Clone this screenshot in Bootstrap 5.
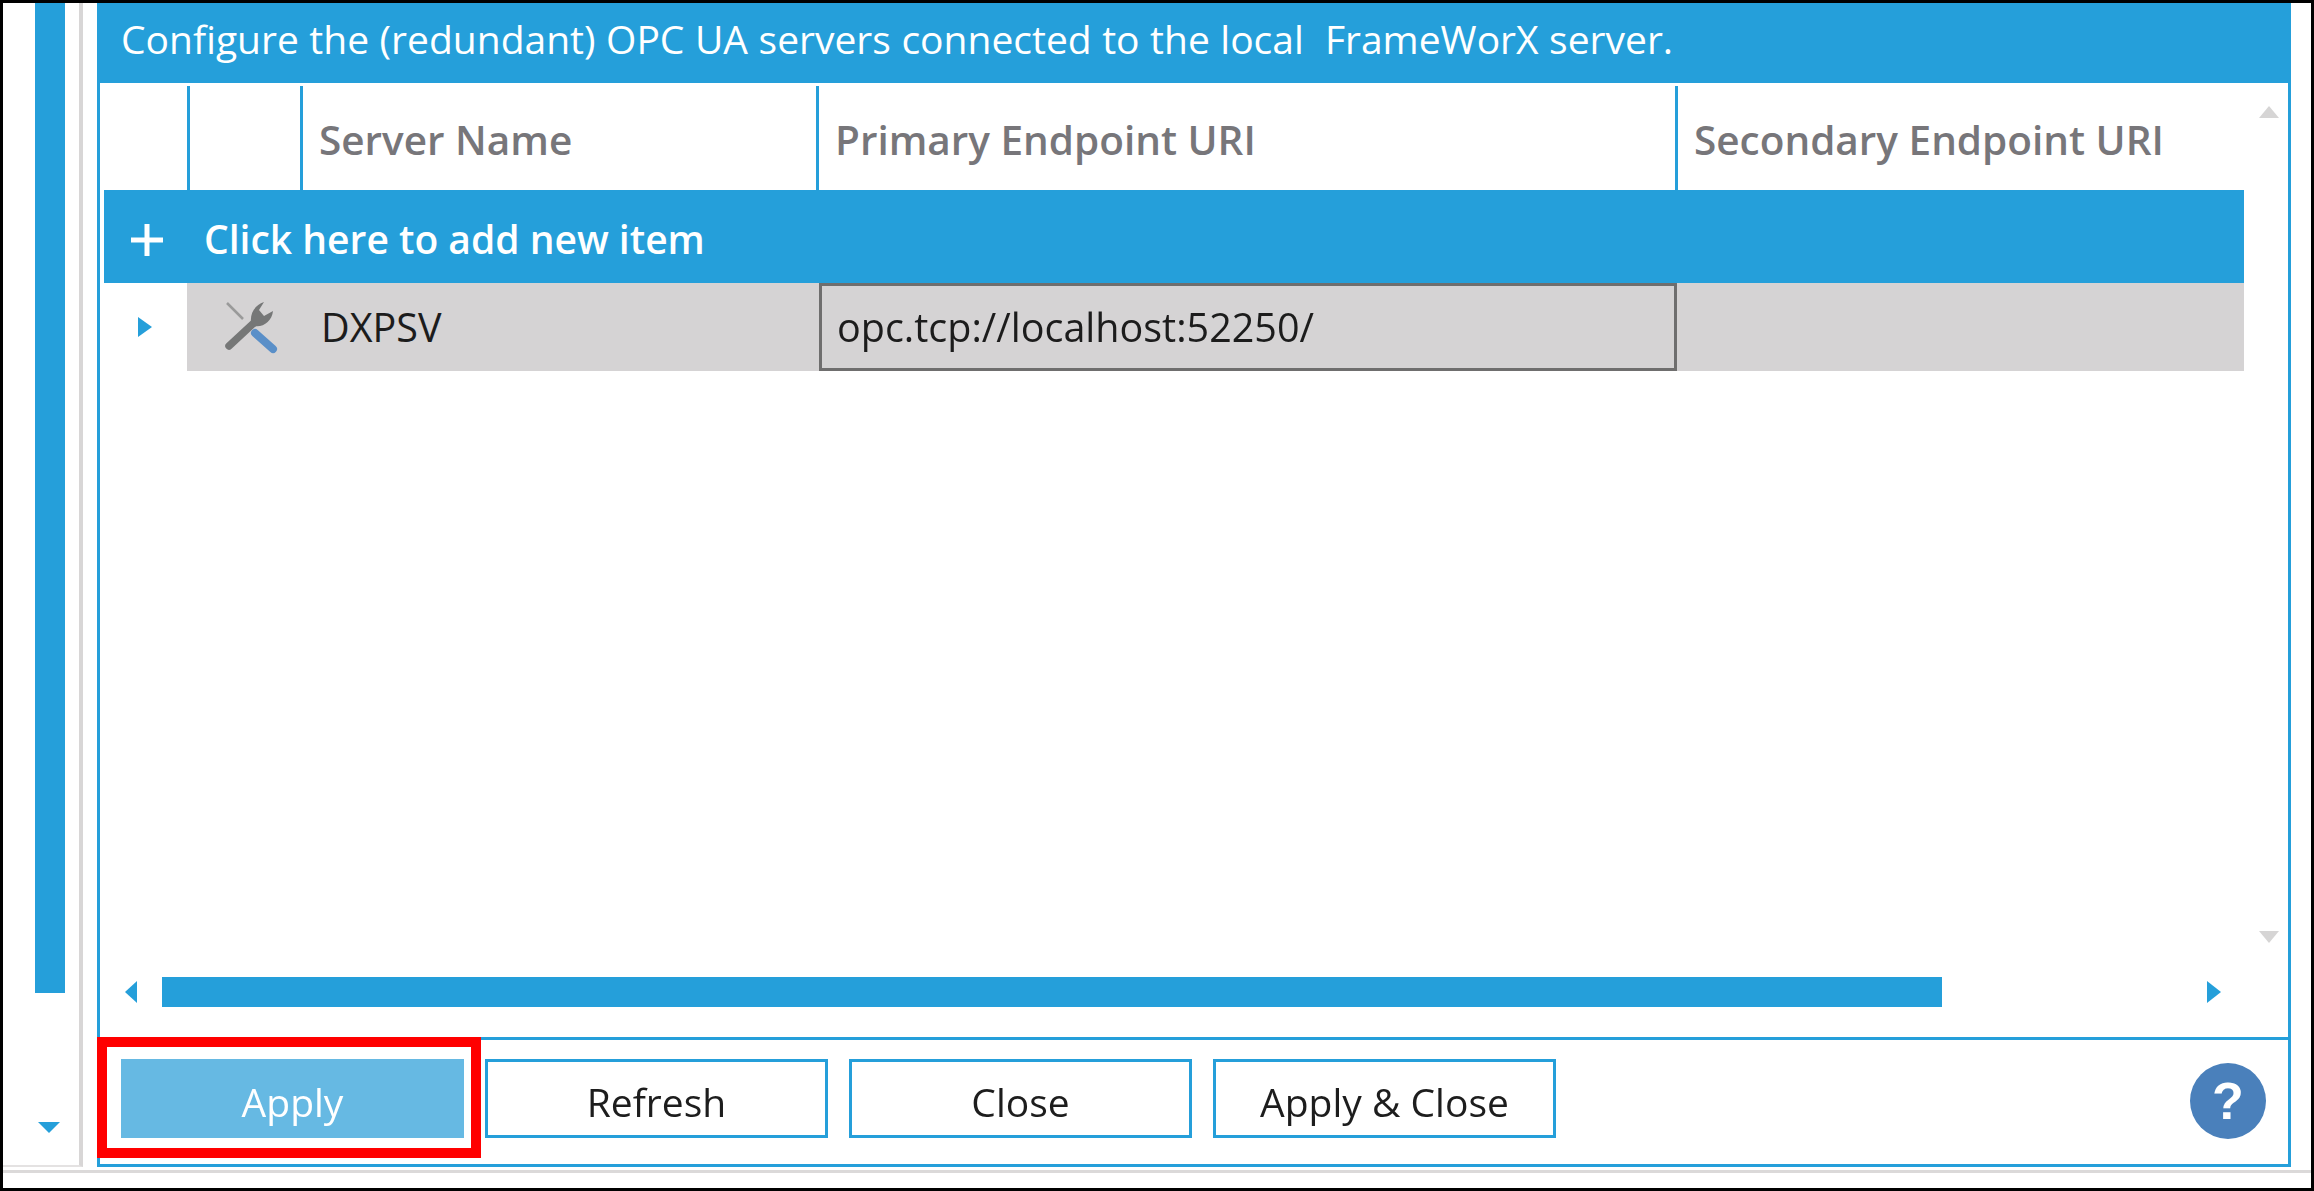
<!DOCTYPE html>
<html lang="en">
<head>
<meta charset="utf-8">
<title>OPC UA Servers</title>
<link href="https://cdn.jsdelivr.net/npm/bootstrap@5.3.0/dist/css/bootstrap.min.css" rel="stylesheet">
<style>
html,body{margin:0;background:#fff;}
body{font-family:"Open Sans","Liberation Sans",sans-serif;overflow:hidden;}
.shot{width:2314px;height:1191px;border:3px solid #000;background:#fff;filter:blur(.7px);}
.upper{height:1164px;}
.rail{width:80px;border-right:4px solid #d8d6d6;border-bottom:2px solid #e4e2e2;padding-left:32px;}
.rail-bar{width:30px;height:990px;background:#259fda;}
.rail-arrow{margin-top:129px;margin-left:3px;display:block;}
.panel{width:2194px;margin-left:14px;border:3px solid #259fda;border-top:0;}
.intro{height:80px;background:#259fda;color:#fff;font-size:39px;padding:0 0 0 21px;line-height:72px;white-space:pre;word-spacing:.4px;}
.grid-area{height:954px;}
.grid-main{width:2188px;height:890px;}
.grid-wrap{padding:3px 0 0 4px;height:890px;}
.srv-table.table{width:2140px;table-layout:fixed;border-collapse:separate;border-spacing:0;margin:0;}
.srv-table.table>:not(caption)>*>*{padding:0;border:0;box-shadow:none;background:transparent;vertical-align:middle;font-size:39.5px;line-height:1.2;overflow:visible;}
.srv-table.table>thead>tr>th{height:104px;font-weight:600;font-size:40.5px;color:#77767a;border-left:3px solid #259fda;padding:5px 0 0 16px;white-space:nowrap;}
.srv-table.table>thead>tr>th:first-child{border-left:0;}
.srv-table.table>tbody>tr.add-row>td{height:93px;background:#259fda;color:#fff;font-weight:600;font-size:39px;}
.add-inner{padding:0 0 0 27px;}
.plus{width:32px;height:32px;flex:none;margin:8px 41px 0 0;}
.add-text{padding-top:6px;}
.srv-table.table>tbody>tr.sel-row>td{height:88px;background:#d5d3d4;color:#1c1c1c;}
.srv-table.table>tbody>tr.sel-row>td.gutter{background:#fff;padding-left:34px;}
.srv-table.table>tbody>tr.sel-row>td.tool{padding-left:35px;}
.srv-table.table>tbody>tr.sel-row>td.name{padding:2px 0 0 21px;}
.uri-box{height:88px;margin:0 -2px 0 3px;border:3px solid #6f6e6e;padding-left:15px;line-height:82px;position:relative;}
.vscroll{width:44px;padding:23px 0 30px 15px;height:890px;}
.hscroll{height:64px;padding:4px 0 0 25px;}
.thumb{width:1780px;height:30px;background:#259fda;margin:0 265px 0 25px;}
.foot{position:relative;border-top:3px solid #259fda;height:125px;padding:19px 22px 0 21px;gap:21px;}
.act-btn.btn{width:343px;height:79px;border:3px solid #259fda;border-radius:0;background:#fff;color:#1d1d1d;font-size:39px;line-height:1;padding:6px 0 0;}
.act-btn.btn.first{background:#66b9e3;border-color:#66b9e3;color:#fff;}
.callout{position:absolute;left:-3px;top:-3px;width:384px;height:121px;border:10px solid #f00;pointer-events:none;}
.help{width:76px;height:76px;background:#4a80bb;color:#fff;font:700 52px/76px "Liberation Sans",sans-serif;margin:4px 0 0 auto;}
.side-end{width:20px;margin-left:17px;}
.side-line{width:3px;background:#d8d6d6;}
.side-mark{width:4px;height:70px;background:#259fda;margin-left:-1px;}
.under{height:21px;padding-top:3px;}
.under-line{height:3px;background:#dbd9d9;}
</style>
</head>
<body>
<div class="shot d-flex flex-column">
  <div class="upper d-flex">
    <div class="rail flex-shrink-0">
      <div class="rail-bar"></div>
      <svg class="rail-arrow" width="22" height="11" viewBox="0 0 22 11"><polygon points="0,0 22,0 11,11" fill="#259fda"/></svg>
    </div>
    <div class="panel d-flex flex-column flex-shrink-0">
      <div class="intro">Configure the (redundant) OPC UA servers connected to the local  FrameWorX server.</div>
      <div class="grid-area">
        <div class="grid-main d-flex">
          <div class="grid-wrap flex-shrink-0">
            <table class="srv-table table">
              <colgroup><col style="width:83px"><col style="width:113px"><col style="width:516px"><col style="width:859px"><col style="width:569px"></colgroup>
              <thead>
                <tr><th></th><th></th><th>Server Name</th><th>Primary Endpoint URI</th><th>Secondary Endpoint URI</th></tr>
              </thead>
              <tbody>
                <tr class="add-row"><td colspan="5"><div class="add-inner d-flex align-items-center">
                  <svg class="plus" viewBox="0 0 32 32"><path d="M13.5 0h5v13.500h13.500v5h-13.500v13.500h-5v-13.500h-13.500v-5h13.500z" fill="#fff"/></svg>
                  <span class="add-text">Click here to add new item</span></div></td></tr>
                <tr class="sel-row">
                  <td class="gutter"><svg class="d-block" width="14" height="20" viewBox="0 0 14 20"><polygon points="0,0 14,10 0,20" fill="#259fda"/></svg></td>
                  <td class="tool"><svg class="d-block" width="56" height="56" viewBox="0 0 56 56">
                    <path d="M5 4 21 20" stroke="#9a9a9a" stroke-width="2.500" fill="none"/>
                    <path d="M33 34 51 50" stroke="#5a8fc8" stroke-width="8" stroke-linecap="round" fill="none"/>
                    <path d="M7 47 34 22" stroke="#767777" stroke-width="7.500" stroke-linecap="round" fill="none"/>
                    <path d="M29 23C28 14 33 6 42 3L37 11 42 17 51 12C50 22 41 29 32 27Z" fill="#767777"/>
                  </svg></td>
                  <td class="name">DXPSV</td>
                  <td><div class="uri-box">opc.tcp://localhost:52250/</div></td>
                  <td></td>
                </tr>
              </tbody>
            </table>
          </div>
          <div class="vscroll d-flex flex-column justify-content-between flex-shrink-0">
            <svg class="d-block" width="20" height="12" viewBox="0 0 20 12"><polygon points="10,0 20,12 0,12" fill="#d6d5d5"/></svg>
            <svg class="d-block" width="20" height="12" viewBox="0 0 20 12"><polygon points="0,0 20,0 10,12" fill="#d6d5d5"/></svg>
          </div>
        </div>
        <div class="hscroll d-flex align-items-start">
          <svg class="flex-shrink-0 mt-1" width="12" height="22" viewBox="0 0 12 22"><polygon points="12,0 12,22 0,11" fill="#259fda"/></svg>
          <div class="thumb flex-shrink-0"></div>
          <svg class="flex-shrink-0 mt-1" width="14" height="22" viewBox="0 0 14 22"><polygon points="0,0 14,11 0,22" fill="#259fda"/></svg>
        </div>
      </div>
      <div class="foot d-flex align-items-start">
        <button type="button" class="act-btn first btn">Apply</button>
        <button type="button" class="act-btn btn">Refresh</button>
        <button type="button" class="act-btn btn">Close</button>
        <button type="button" class="act-btn btn">Apply &amp; Close</button>
        <div class="help rounded-circle text-center">?</div>
        <div class="callout"></div>
      </div>
    </div>
    <div class="side-end d-flex justify-content-end flex-shrink-0">
      <div class="side-line d-flex flex-column justify-content-end"><div class="side-mark"></div></div>
    </div>
  </div>
  <div class="under"><div class="under-line"></div></div>
</div>
<script src="https://cdn.jsdelivr.net/npm/bootstrap@5.3.0/dist/js/bootstrap.bundle.min.js"></script>
</body>
</html>
